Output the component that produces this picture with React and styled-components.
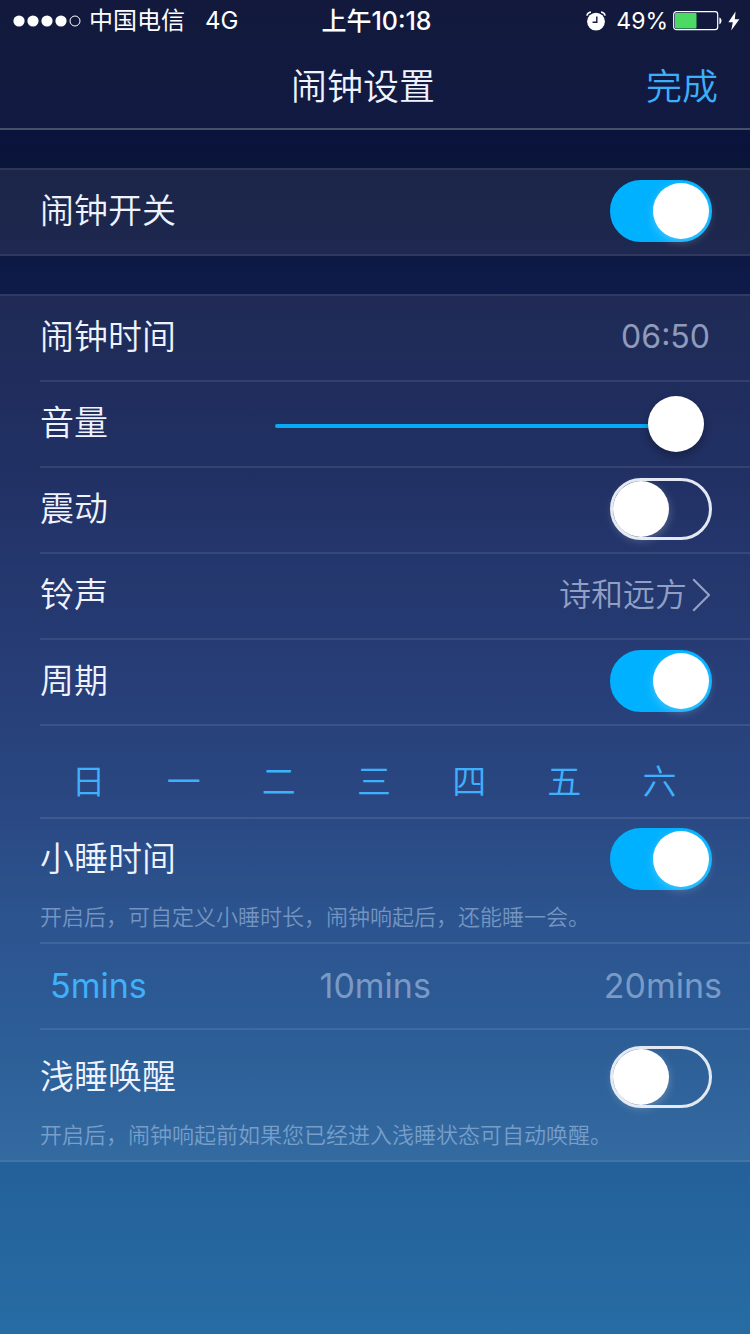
import React, { useState } from "react";
import styled, { createGlobalStyle } from "styled-components";

const GlobalStyle = createGlobalStyle`
  * {
    box-sizing: border-box;
  }
  body {
    margin: 0;
    background: #276ca4;
    font-family: Inter, "Noto Sans CJK SC", sans-serif;
    font-weight: 350;
    color: #eef3ff;
  }
  button, input {
    font: inherit;
    margin: 0;
  }
  button {
    padding: 0;
    border: 0;
    background: none;
    cursor: pointer;
  }
`;

const Page = styled.div`
  min-height: 100vh;
  background: linear-gradient(
    #0b1236 0%,
    #0a133c 10%,
    #0a153a 12%,
    #0c1740 17%,
    #0e1a48 21%,
    #112158 35%,
    #162d6a 48%,
    #193776 58%,
    #1c4988 70%,
    #1d508e 77%,
    #24609a 87%,
    #276ca4 100%
  );
`;

const Top = styled.header`
  background: rgba(255, 255, 255, 0.03);
  border-bottom: 2px solid #475069;
`;

const StatusBar = styled.div`
  display: grid;
  grid-template-columns: 1fr auto 1fr;
  align-items: center;
  height: 42px;
  padding: 0 10px 0 13px;
  color: #fff;
  font-size: 24px;
  font-weight: 400;
  line-height: 40px;
`;

const StatusGroup = styled.div`
  display: flex;
  align-items: center;
  justify-content: ${(props) => (props.$end ? "flex-end" : "flex-start")};
`;

const Carrier = styled.span`
  margin: 0 20px 0 8px;
`;

const Clock = styled.span`
  font-size: 25px;
  font-weight: 500;
`;

const Percent = styled.span`
  margin: 0 5px 0 10px;
  font-size: 23px;
`;

const Battery = styled.svg`
  margin-right: 6px;
`;

const NavBar = styled.div`
  display: grid;
  grid-template-columns: 1fr auto 1fr;
  align-items: center;
  height: 86px;
  padding: 0 32px 2px 8px;
`;

const Title = styled.h1`
  grid-column: 2;
  margin: 0;
  font-size: 36px;
  font-weight: 350;
`;

const Done = styled.button`
  justify-self: end;
  font-size: 36px;
  color: #3daefa;
`;

const Panel = styled.section`
  margin-top: 38px;
  background: rgba(255, 255, 255, 0.07);
  border: solid rgba(255, 255, 255, 0.08);
  border-width: 2px 0;
`;

const Row = styled.div`
  display: flex;
  align-items: center;
  justify-content: space-between;
  min-height: ${(props) => (props.$last ? 84 : 86)}px;
  margin-left: 40px;
  padding: 0 38px 2px 0;
  border-bottom: ${(props) => (props.$last ? 0 : 2)}px solid rgba(255, 255, 255, 0.09);
`;

const Label = styled.label`
  font-size: 34px;
  line-height: 40px;
`;

const Value = styled.button`
  display: flex;
  align-items: center;
  gap: 5px;
  padding-right: 2px;
  font-size: 32px;
  font-weight: ${(props) => (props.$digits ? 400 : 350)};
  line-height: 40px;
  color: rgba(222, 230, 255, 0.6);
`;

const Switch = styled.input.attrs({ type: "checkbox", role: "switch" })`
  appearance: none;
  flex: none;
  width: 102px;
  height: 62px;
  border: 3px solid #e4e8f2;
  border-radius: 31px;
  cursor: pointer;

  &::before {
    content: "";
    display: block;
    width: 56px;
    height: 56px;
    border-radius: 50%;
    background: #fff;
    box-shadow: 0 3px 10px rgba(255, 255, 255, 0.25);
  }
  &:checked {
    border-color: #00b1ff;
    background: #00b1ff;
  }
  &:checked::before {
    margin-left: 40px;
  }
`;

const Slider = styled.input.attrs({ type: "range" })`
  appearance: none;
  width: 65%;
  height: 66px;
  padding-top: 6px;
  background: none;

  &::-webkit-slider-runnable-track {
    height: 4px;
    border-radius: 2px;
    background: linear-gradient(#06abf3, #06abf3) 0 0 / var(--fill) 100% no-repeat;
  }
  &::-webkit-slider-thumb {
    appearance: none;
    width: 56px;
    height: 56px;
    margin-top: -28px;
    border-radius: 50%;
    background: #fff;
    box-shadow: 0 4px 8px rgba(0, 0, 0, 0.3);
  }
`;

const Week = styled.div`
  display: grid;
  grid-template-columns: repeat(7, 1fr);
  margin-left: 40px;
  padding: 36px 43px 15px 1px;
  border-bottom: 2px solid rgba(255, 255, 255, 0.09);
`;

const Option = styled.button`
  font-size: ${(props) => props.$size}px;
  line-height: 40px;
  color: ${(props) => (props["aria-pressed"] ? "#3fb0fb" : "rgba(190, 212, 245, 0.55)")};
`;

const Durations = styled(Row)`
  padding: 0 28px 0 10px;
  font-weight: 400;
`;

const HintRow = styled.div`
  margin-left: 40px;
  padding: ${(props) => (props.$last ? 16 : 9)}px 38px 10px 0;
  border-bottom: ${(props) => (props.$last ? 0 : 2)}px solid rgba(255, 255, 255, 0.09);
`;

const HintHead = styled.div`
  display: flex;
  align-items: center;
  justify-content: space-between;
`;

const Hint = styled.p`
  margin: 12px 0 0;
  font-size: 22px;
  line-height: 30px;
  color: rgba(190, 212, 245, 0.5);
`;

const SignalDots = () => (
  <svg width="68" height="12" viewBox="0 0 68 12">
    {[6, 20, 34, 48].map((x) => (
      <circle key={x} cx={x} cy="6" r="5.6" fill="#fff" />
    ))}
    <circle cx="62" cy="6" r="5" fill="none" stroke="#fff" />
  </svg>
);

const AlarmIcon = () => (
  <svg width="20" height="20" viewBox="0 0 20 20" fill="none">
    <circle cx="10" cy="10.6" r="8.9" fill="#fff" />
    <path d="M0.8 4.6A5 5 0 0 1 5 0.9M15 0.9A5 5 0 0 1 19.2 4.6" stroke="#fff" strokeWidth="1.5" />
    <path d="M10.8 5.4v5.8H6.6" stroke="#121a3b" strokeWidth="1.4" />
  </svg>
);

const BatteryIcon = () => (
  <Battery width="49" height="20" viewBox="0 0 49 20" fill="none">
    <rect x="0.7" y="0.7" width="44" height="18" rx="2.6" stroke="#fff" strokeWidth="1.2" />
    <rect x="2" y="2" width="21.5" height="15.4" rx="1" fill="#4cd964" />
    <path d="M46.4 6.4c2.8.8 2.8 6 0 6.8z" fill="#fff" />
  </Battery>
);

const BoltIcon = () => (
  <svg width="12" height="20" viewBox="0 0 12 20">
    <path d="M7.6 0.6L0.4 11.2h4.4L3.2 19.4l8.2-11.2H6.8z" fill="#fff" />
  </svg>
);

const Chevron = () => (
  <svg width="18" height="34" viewBox="0 0 18 34" fill="none">
    <path d="M1.2 1.2L17 17 1.2 32.8" stroke="currentColor" strokeWidth="2.2" />
  </svg>
);

const days = ["日", "一", "二", "三", "四", "五", "六"];
const durations = ["5mins", "10mins", "20mins"];

const App = () => {
  const [on, setOn] = useState({ alarm: true, vibrate: false, repeat: true, nap: true, wake: false });
  const [volume, setVolume] = useState(98);
  const [picked, setPicked] = useState(days);
  const [duration, setDuration] = useState("5mins");

  const bind = (name) => ({
    id: name,
    checked: on[name],
    onChange: (e) => setOn({ ...on, [name]: e.target.checked }),
  });
  const toggleDay = (day) =>
    setPicked(picked.includes(day) ? picked.filter((d) => d !== day) : [...picked, day]);

  return (
    <Page>
      <GlobalStyle />
      <Top>
        <StatusBar>
          <StatusGroup>
            <SignalDots />
            <Carrier>中国电信</Carrier>
            <span>4G</span>
          </StatusGroup>
          <Clock>上午10:18</Clock>
          <StatusGroup $end>
            <AlarmIcon />
            <Percent>49%</Percent>
            <BatteryIcon />
            <BoltIcon />
          </StatusGroup>
        </StatusBar>
        <NavBar>
          <Title>闹钟设置</Title>
          <Done>完成</Done>
        </NavBar>
      </Top>

      <Panel>
        <Row $last>
          <Label htmlFor="alarm">闹钟开关</Label>
          <Switch {...bind("alarm")} />
        </Row>
      </Panel>

      <Panel>
        <Row>
          <Label htmlFor="time">闹钟时间</Label>
          <Value id="time" $digits>
            06:50
          </Value>
        </Row>
        <Row>
          <Label htmlFor="volume">音量</Label>
          <Slider
            id="volume"
            value={volume}
            onChange={(e) => setVolume(Number(e.target.value))}
            style={{ "--fill": `${volume}%` }}
          />
        </Row>
        <Row>
          <Label htmlFor="vibrate">震动</Label>
          <Switch {...bind("vibrate")} />
        </Row>
        <Row>
          <Label htmlFor="ringtone">铃声</Label>
          <Value id="ringtone">
            诗和远方
            <Chevron />
          </Value>
        </Row>
        <Row>
          <Label htmlFor="repeat">周期</Label>
          <Switch {...bind("repeat")} />
        </Row>
        <Week>
          {days.map((day) => (
            <Option key={day} $size={34} aria-pressed={picked.includes(day)} onClick={() => toggleDay(day)}>
              {day}
            </Option>
          ))}
        </Week>
        <HintRow>
          <HintHead>
            <Label htmlFor="nap">小睡时间</Label>
            <Switch {...bind("nap")} />
          </HintHead>
          <Hint>开启后，可自定义小睡时长，闹钟响起后，还能睡一会。</Hint>
        </HintRow>
        <Durations>
          {durations.map((item) => (
            <Option key={item} $size={34} aria-pressed={item === duration} onClick={() => setDuration(item)}>
              {item}
            </Option>
          ))}
        </Durations>
        <HintRow $last>
          <HintHead>
            <Label htmlFor="wake">浅睡唤醒</Label>
            <Switch {...bind("wake")} />
          </HintHead>
          <Hint>开启后，闹钟响起前如果您已经进入浅睡状态可自动唤醒。</Hint>
        </HintRow>
      </Panel>
    </Page>
  );
};

export default App;
